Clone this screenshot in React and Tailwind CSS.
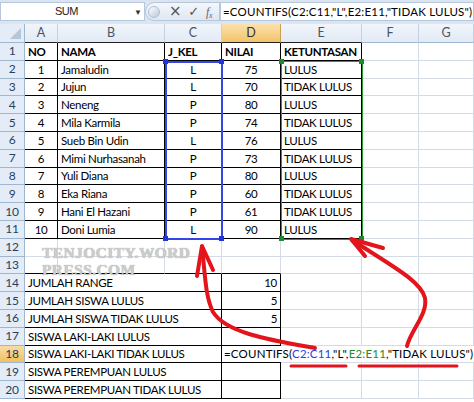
import React from "react";

const GRID = "border-[#d4dbe6]";
const cols = ["A", "B", "C", "D", "E", "F", "G"];
const widths = ["w-[33px]", "w-[107px]", "w-[57px]", "w-[59px]", "w-[81px]", "w-[57px]", "w-[55px]"];

const students = [
  [1, "Jamaludin", "L", 75, "LULUS"],
  [2, "Jujun", "L", 70, "TIDAK LULUS"],
  [3, "Neneng", "P", 80, "LULUS"],
  [4, "Mila Karmila", "P", 74, "TIDAK LULUS"],
  [5, "Sueb Bin Udin", "L", 76, "LULUS"],
  [6, "Mimi Nurhasanah", "P", 73, "TIDAK LULUS"],
  [7, "Yuli Diana", "P", 80, "LULUS"],
  [8, "Eka Riana", "P", 60, "TIDAK LULUS"],
  [9, "Hani El Hazani", "P", 61, "TIDAK LULUS"],
  [10, "Doni Lumia", "L", 90, "LULUS"],
];

const summary = [
  ["JUMLAH RANGE", "10"],
  ["JUMLAH SISWA LULUS", "5"],
  ["JUMLAH SISWA TIDAK LULUS", "5"],
  ["SISWA LAKI-LAKI LULUS", ""],
  ["SISWA LAKI-LAKI TIDAK LULUS", null],
  ["SISWA PEREMPUAN LULUS", ""],
  ["SISWA PEREMPUAN TIDAK LULUS", ""],
];

// row number cell on the left
const RowHead = ({ n, active }) => (
  <div
    className={`w-[25px] shrink-0 h-full flex items-center justify-center border-r border-b border-[#9eb6ce] text-[12px] ${
      active ? "bg-gradient-to-b from-[#f9dca6] to-[#f1c15f] text-[#1e395b]" : "bg-[#e4ecf7] text-[#2a3f5c]"
    }`}
  >
    {n}
  </div>
);

const Cell = ({ w, className = "", children }) => (
  <div className={`${w} shrink-0 h-full flex items-center px-[3px] border-r border-b whitespace-nowrap ${className}`}>
    {children}
  </div>
);

const Row = ({ n, active, children }) => (
  <div className="flex h-[17.8px]">
    <RowHead n={n} active={active} />
    {children}
  </div>
);

const Formula = () => (
  <span className="tracking-[0.2px]">
    =COUNTIFS(<span className="text-[#2b3fe0]">C2:C11</span>,"L",<span className="text-[#1f8a2c]">E2:E11</span>,"TIDAK LULUS")
  </span>
);

export default function App() {
  return (
    <div className="relative w-[474px] h-[402px] overflow-hidden bg-white text-black text-[11.5px] tracking-[-0.3px] font-['Lato',sans-serif]">
      {/* formula bar */}
      <div className="h-[24px] bg-[#dbe5f1] pt-[2px] flex items-start">
        <div className="w-[145px] shrink-0 h-[19px] bg-white border border-[#b6c7dc] flex items-center relative">
          <span className="ml-[54px] text-[11px] tracking-[-0.5px] font-['Liberation_Sans',sans-serif] text-[#222]">SUM</span>
          <span className="absolute left-[133px] top-[3px] text-[8px] text-[#333]">▼</span>
        </div>
        <div className="w-[75px] shrink-0 h-[19px] flex items-center rounded-l-full border border-[#b6c7dc] bg-gradient-to-b from-[#f4f7fb] to-[#dfe7f2]">
          <div className="w-[12px] h-[12px] ml-[2px] rounded-full bg-gradient-to-br from-[#ffffff] to-[#b9c8da] border border-[#aebfd3]" />
          <span className="ml-[9px] text-[15px] leading-none text-[#555] font-['DejaVu_Sans',sans-serif]">×</span>
          <span className="ml-[7px] text-[13px] leading-none text-[#555] font-['DejaVu_Sans',sans-serif]">✓</span>
          <span className="ml-[7px] text-[12px] italic text-[#666] font-['Liberation_Serif',serif]">
            f<sub className="text-[8px]">x</sub>
          </span>
        </div>
        <div className="flex-1 min-w-0 overflow-hidden h-[19px] bg-white border border-[#b6c7dc] flex items-center pl-[2px] whitespace-nowrap tracking-[0.2px]">
          =COUNTIFS(C2:C11,"L",E2:E11,"TIDAK LULUS")
        </div>
      </div>

      {/* column headers */}
      <div className="flex h-[19px]">
        <div className="w-[25px] shrink-0 h-full bg-[#e4ecf7] border-r border-b border-[#9eb6ce] relative">
          <div className="absolute right-[3px] bottom-[3px] w-0 h-0 border-l-[11px] border-l-transparent border-b-[11px] border-b-[#b6c6d8]" />
        </div>
        {cols.map((c, i) => (
          <div
            key={c}
            className={`${widths[i]} shrink-0 h-full flex items-center justify-center border-r text-[12.5px] tracking-normal ${
              c === "D"
                ? "bg-gradient-to-b from-[#fbe0ad] to-[#f2c467] text-[#333] border-[#c9a24d]"
                : "bg-gradient-to-b from-[#f1f5fb] to-[#e2eaf5] text-[#4d5563] border-[#c3d1e3]"
            } border-b ${i < 5 ? "border-b-[#222]" : "border-b-[#9eb6ce]"}`}
          >
            {c}
          </div>
        ))}
      </div>

      {/* header row */}
      <Row n={1}>
        <Cell w={widths[0]} className="border-black font-bold">NO</Cell>
        <Cell w={widths[1]} className="border-black font-bold">NAMA</Cell>
        <Cell w={widths[2]} className="border-black font-bold">J_KEL</Cell>
        <Cell w={widths[3]} className="border-black font-bold">NILAI</Cell>
        <Cell w={widths[4]} className="border-black font-bold">KETUNTASAN</Cell>
        <Cell w={widths[5]} className={GRID} />
        <Cell w={widths[6]} className={GRID} />
      </Row>

      {students.map((s, i) => (
        <Row key={s[0]} n={i + 2}>
          <Cell w={widths[0]} className="border-black justify-center">{s[0]}</Cell>
          <Cell w={widths[1]} className="border-black">{s[1]}</Cell>
          <Cell w={widths[2]} className="border-black justify-center">{s[2]}</Cell>
          <Cell w={widths[3]} className="border-black justify-center">{s[3]}</Cell>
          <Cell w={widths[4]} className="border-black">{s[4]}</Cell>
          <Cell w={widths[5]} className={GRID} />
          <Cell w={widths[6]} className={GRID} />
        </Row>
      ))}

      {[12, 13].map((n) => (
        <Row key={n} n={n}>
          {cols.map((c, i) => (
            <Cell
              key={c}
              w={widths[i]}
              className={`${GRID} ${n === 13 && i < 4 ? "border-b-black" : ""}`}
            />
          ))}
        </Row>
      ))}

      {summary.map(([label, val], i) => {
        const n = i + 14;
        const editing = val === null;
        return (
          <Row key={n} n={n} active={editing}>
            <Cell w="w-[197px]" className="border-black">{label}</Cell>
            {editing ? (
              <>
                <div className="w-[59px] shrink-0 h-full flex items-center pl-[2px] border-b border-black whitespace-nowrap relative z-10">
                  <Formula />
                </div>
                <div className="flex-1 h-full border-b border-[#d4dbe6]" />
              </>
            ) : (
              <>
                <Cell w={widths[3]} className="border-black justify-end">{val}</Cell>
                <Cell w={widths[4]} className={GRID} />
                <Cell w={widths[5]} className={GRID} />
                <Cell w={widths[6]} className={GRID} />
              </>
            )}
          </Row>
        );
      })}

      {/* watermark */}
      <div className="absolute left-[42px] top-[244px] text-[15.5px] leading-[17px] font-bold tracking-[0.4px] text-[#cdcdcd] font-['Liberation_Serif',serif] [text-shadow:0_0_1px_#999]">
        TENJOCITY.WORD
        <br />
        PRESS.COM
      </div>

      {/* range highlight C2:C11 */}
      <div className="absolute left-[165px] top-[61px] w-[58px] h-[179px] border-2 border-[#3447e6]" />
      {[[163, 59], [219, 59], [163, 236], [219, 236]].map(([x, y], i) => (
        <div key={i} className="absolute w-[5px] h-[5px] bg-[#2233dd]" style={{ left: x, top: y }} />
      ))}
      {/* range highlight E2:E11 */}
      <div className="absolute left-[281px] top-[61px] w-[82px] h-[179px] border-[1.5px] border-[#2f9a3c]" />
      {[[279, 59], [359, 59], [279, 236], [359, 236]].map(([x, y], i) => (
        <div key={i} className="absolute w-[5px] h-[5px] bg-[#1f8a2c]" style={{ left: x, top: y }} />
      ))}

      {/* red hand-drawn annotations */}
      <svg className="absolute inset-0 pointer-events-none" width="474" height="402" viewBox="0 0 474 402">
        <g fill="none" stroke="#e3141b" strokeLinecap="round" strokeLinejoin="round">
          <path strokeWidth="4" d="M315 348 C270 340 226 333 213 312 C205 296 205 272 202 247" />
          <path strokeWidth="4" d="M202 246 L197 276 M202 246 L213 270" />
          <path strokeWidth="4" d="M407 346 C411 330 428 314 425 298 C421 281 392 266 352 240" />
          <path strokeWidth="4" d="M351 239 L383 248 M351 239 L365 256" />
          <path strokeWidth="3" d="M291 366 L346 366 M359 366 L457 366" />
        </g>
      </svg>
    </div>
  );
}
